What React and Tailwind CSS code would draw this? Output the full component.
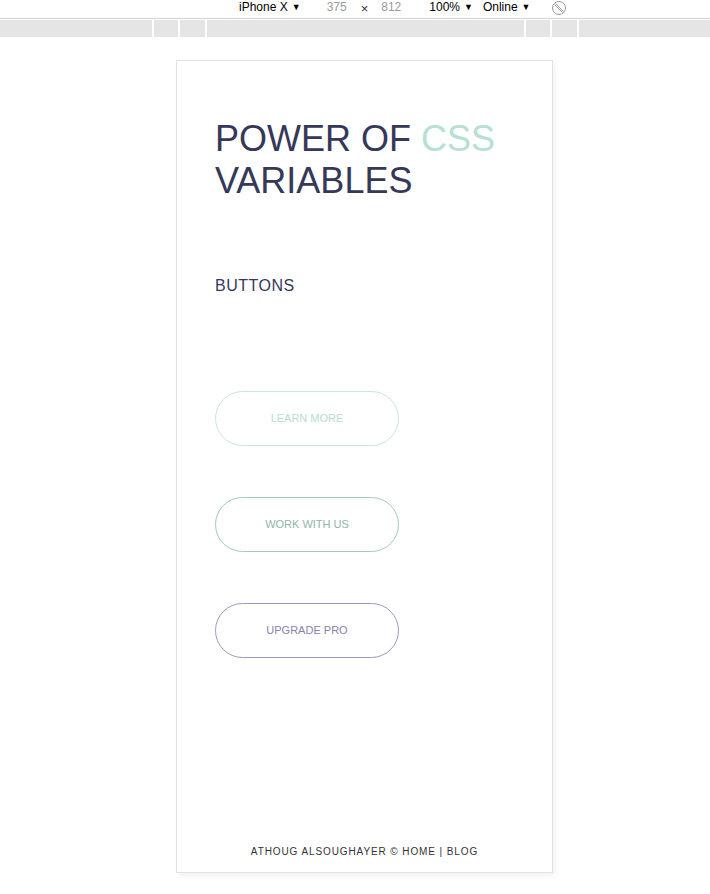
import React from "react";

const font = { fontFamily: '"Liberation Sans", Arial, sans-serif' };

// --- devtools device toolbar ---
const Toolbar = () => (
  <div className="w-full">
    <div className="h-[19px] flex items-start pt-[1px] text-[12px] text-black border-b border-[#d4d4d4] leading-[12px]">
      <span className="ml-[239px]">iPhone X</span>
      <span className="ml-[4px] text-[9px]">▼</span>
      <span className="ml-[26px] text-[#9a9a9a]">375</span>
      <span className="ml-[14px] mt-[1px] text-[13px] leading-[13px] text-[#333]">×</span>
      <span className="ml-[13px] text-[#9a9a9a]">812</span>
      <span className="ml-[28px]">100%</span>
      <span className="ml-[4px] text-[9px]">▼</span>
      <span className="ml-[10px]">Online</span>
      <span className="ml-[4px] text-[9px]">▼</span>
      <RotateIcon />
    </div>
    <div className="mt-[1px] h-[17px] bg-[#e5e5e5] flex">
      <div className="w-[152px]" />
      <div className="w-[2px] bg-white" />
      <div className="w-[24px]" />
      <div className="w-[2px] bg-white" />
      <div className="w-[25px]" />
      <div className="w-[2px] bg-white" />
      <div className="w-[317px]" />
      <div className="w-[2px] bg-white" />
      <div className="w-[24px]" />
      <div className="w-[2px] bg-white" />
      <div className="w-[25px]" />
      <div className="w-[2px] bg-white" />
      <div className="flex-1" />
    </div>
  </div>
);

const RotateIcon = () => (
  <svg className="ml-[20px] -mt-[1px]" width="16" height="16" viewBox="0 0 16 16" fill="none" stroke="#999" strokeWidth="1">
    <circle cx="8" cy="8" r="6.5" />
    <path d="M4.5 3.5 L12.5 11.5 M3.5 4.5 L11.5 12.5" />
  </svg>
);

const OutlineButton = ({ label, border, color }) => (
  <button
    className={`w-[184px] h-[55px] rounded-full border ${border} ${color} text-[11px] uppercase flex items-center justify-center bg-white`}
    style={font}
  >
    {label}
  </button>
);

export default function App() {
  return (
    <div className="min-h-[894px] bg-white" style={font}>
      <Toolbar />

      <div className="ml-[176px] mt-[23px] w-[377px] h-[813px] border border-[#e2e2e2] shadow-[2px_3px_5px_rgba(0,0,0,0.06)] flex flex-col">
        <div className="pl-[38px] pt-[57px]">
          <h1 className="text-[36px] leading-[42px] text-[#353858] font-normal uppercase">
            Power of <span className="text-[#b5e0d3]">CSS</span>
            <br />
            Variables
          </h1>

          <h2 className="mt-[74px] text-[16px] leading-[20px] tracking-[0.5px] text-[#353858]">BUTTONS</h2>

          <div className="mt-[95px] flex flex-col gap-[51px]">
            <OutlineButton label="Learn more" border="border-[#c8e6dd]" color="text-[#b7ddd2]" />
            <OutlineButton label="Work with us" border="border-[#a3cbbd]" color="text-[#8fb5aa]" />
            <OutlineButton label="Upgrade pro" border="border-[#9f9abd]" color="text-[#8883ad]" />
          </div>
        </div>

        <footer className="mt-auto pb-[14px] text-center text-[10px] leading-[12px] tracking-[0.9px] text-[#333]">
          ATHOUG ALSOUGHAYER © HOME | BLOG
        </footer>
      </div>
    </div>
  );
}
